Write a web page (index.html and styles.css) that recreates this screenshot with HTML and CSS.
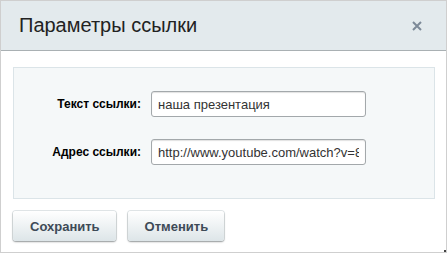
FILE: index.html
```html
<!DOCTYPE html>
<html lang="ru">
<head>
<meta charset="UTF-8" />
<title>Параметры ссылки</title>
<link rel="stylesheet" href="styles.css">
</head>
<body>

<div class="dialog">
  <div class="dialog-head">
    <span class="dialog-title">Параметры ссылки</span>
    <svg class="dialog-close" width="10" height="10" viewBox="0 0 10 10">
      <path d="M1 1L9 9M9 1L1 9" stroke="#7d8a98" stroke-width="2" />
    </svg>
  </div>

  <div class="dialog-body">
    <div class="panel">
      <label class="field-label" for="linkText">Текст ссылки:</label>
      <input class="field-input" type="text" id="linkText" value="наша презентация" />
      <label class="field-label" for="linkHref">Адрес ссылки:</label>
      <input class="field-input" type="text" id="linkHref" value="http://www.youtube.com/watch?v=8Xq2mRzL0pE" />
    </div>
  </div>

  <div class="dialog-buttons">
    <button class="btn" type="button">Сохранить</button>
    <button class="btn" type="button">Отменить</button>
  </div>
  <span class="resize"></span>
</div>

</body>
</html>
```

FILE: styles.css
```css
body { margin: 0; font-family: Arial, "Liberation Sans", sans-serif; background: #fff; }
.dialog { position: relative; width: 445px; height: 251px; border: 1px solid #cfcfcf; background: #fff; }
.dialog-head { height: 49px; display: flex; align-items: center; justify-content: space-between; padding: 0 24px 0 18px; background: #e3eaed; border-bottom: 1px solid #a9b0b3; }
.dialog-title { font-size: 20px; color: #222; }
.dialog-close { display: block; cursor: pointer; }
.dialog-body { padding: 16px 11px 0 12px; }
.panel { display: grid; grid-template-columns: 127px 215px; column-gap: 10px; row-gap: 22px; align-items: center; padding: 23px 0 33px; background: #f5f8f9; border: 1px solid #dbe4e8; }
.field-label { text-align: right; font-size: 12px; font-weight: bold; color: #000; }
.field-input { box-sizing: border-box; height: 26px; width: 215px; padding: 0 6px; font-family: Arial, "Liberation Sans", sans-serif; font-size: 13px; color: #333; border: 1px solid #a3a8ab; border-radius: 3px; box-shadow: inset 0 1px 1px #e2e2e2; background: #fff; }
.dialog-buttons { display: flex; gap: 12px; padding: 12px 12px 0; }
.btn { height: 30px; padding: 0 16px 0 17px; font-family: Arial, "Liberation Sans", sans-serif; font-size: 13px; font-weight: bold; color: #3e4a57; border: none; border-radius: 3px; background: linear-gradient(#ffffff, #dde5e8); box-shadow: 0 1px 2px rgba(0,0,0,.35), 0 0 0 1px #e3e8ea; cursor: pointer; }
.resize { position: absolute; right: 0; bottom: 0; width: 2px; height: 2px; background: #444; }
```
